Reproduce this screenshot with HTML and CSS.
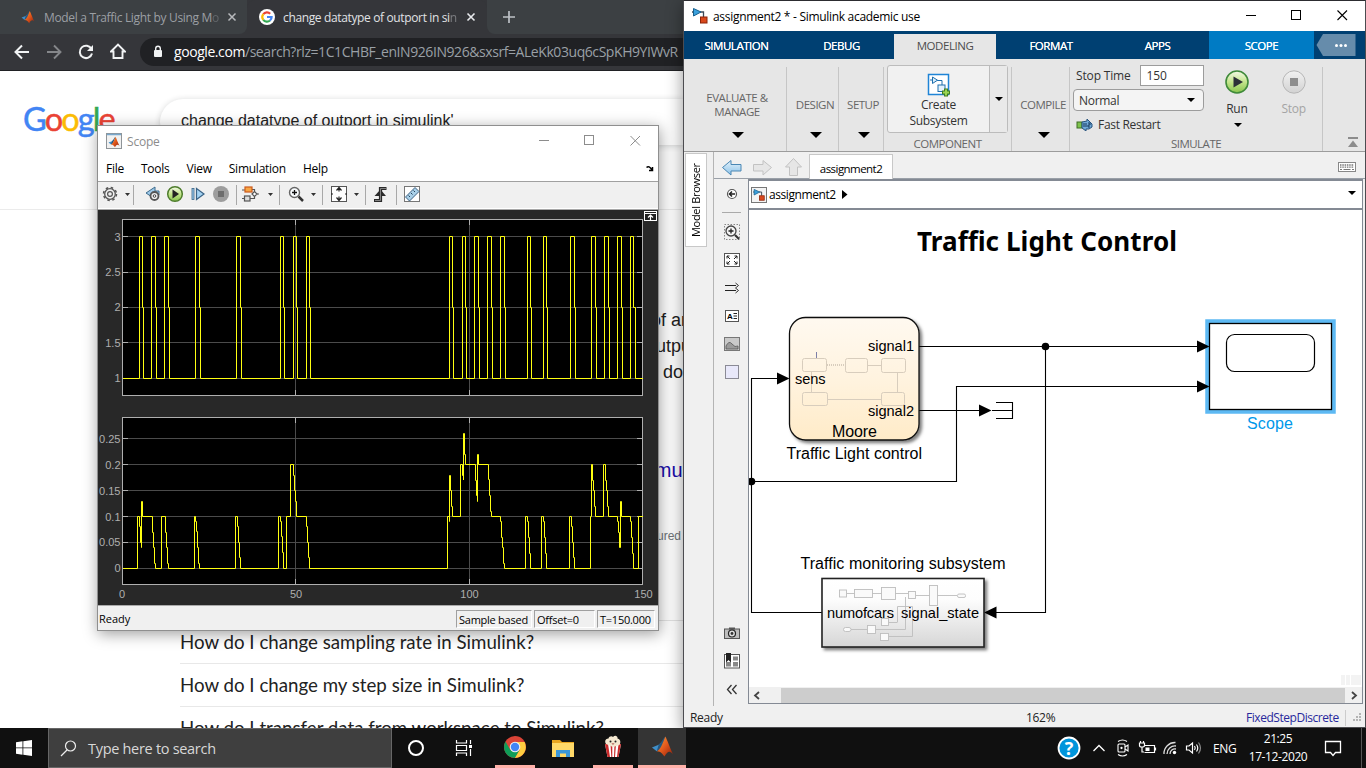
FILE: index.html
```html
<!DOCTYPE html>
<html lang="en">
<head>
<meta charset="utf-8">
<title>Desktop</title>
<link rel="stylesheet" href="styles.css">
</head>
<body>
<svg class="defs" width="0" height="0" aria-hidden="true">
  <defs>
    <linearGradient id="gOrange" x1="0" y1="0" x2="1" y2="1"><stop offset="0" stop-color="#f7a13c"/><stop offset=".5" stop-color="#e2581c"/><stop offset="1" stop-color="#8c1d0c"/></linearGradient>
    <linearGradient id="gGreen" x1="0" y1="0" x2="0" y2="1"><stop offset="0" stop-color="#f4fae8"/><stop offset=".5" stop-color="#c4e58c"/><stop offset="1" stop-color="#86c44c"/></linearGradient>
    <linearGradient id="gGrey" x1="0" y1="0" x2="0" y2="1"><stop offset="0" stop-color="#f2f2f2"/><stop offset="1" stop-color="#d2d2d2"/></linearGradient>
    <linearGradient id="gBlue" x1="0" y1="0" x2="0" y2="1"><stop offset="0" stop-color="#e4f3fc"/><stop offset="1" stop-color="#8cc2e8"/></linearGradient>
    <linearGradient id="gMoore" x1="0" y1="0" x2="0" y2="1"><stop offset="0" stop-color="#fff9f0"/><stop offset=".5" stop-color="#fff3df"/><stop offset="1" stop-color="#ffebc8"/></linearGradient>
    <linearGradient id="gSub" x1="0" y1="0" x2="0" y2="1"><stop offset="0" stop-color="#fff"/><stop offset=".3" stop-color="#fdfdfd"/><stop offset="1" stop-color="#d6d6d6"/></linearGradient>
    <filter id="drop" x="-10%" y="-10%" width="125%" height="125%"><feDropShadow dx="2.5" dy="2.5" stdDeviation="1.5" flood-color="#000" flood-opacity=".5"/></filter>
    <symbol id="matlab" viewBox="0 0 24 24">
      <path d="M1 13 8 10.300 11.500 7 9 14.500 6 17Z" fill="#3f8fc9"/>
      <path d="M8 10.300 C11 8 12 4 15 1.500 L10 15 6 17Z" fill="#25567e"/>
      <path d="M15 1.500 C17 5 20 14 23 20 C20 16.500 17.500 16 14 22.500 C12 20 10.500 17 6 17 C10 15 12 9 15 1.500Z" fill="url(#gOrange)"/>
    </symbol>
    <symbol id="simulink" viewBox="0 0 16 16">
      <path d="M0 4H2M8 4H11.500V9" fill="none" stroke="#3d4a58" stroke-width="1.300"/>
      <path d="M1.500 .5 9 4 1.500 8Z" fill="#3aa0dc" stroke="#17608f"/>
      <rect x="8.500" y="9" width="6.500" height="6" fill="#d9481c" stroke="#8c2409"/>
    </symbol>
    <symbol id="play" viewBox="0 0 24 24">
      <circle cx="12" cy="12" r="11" fill="url(#gGreen)" stroke="#3f8a3a" stroke-width="1.600"/>
      <path d="M8.500 6.500 18 12 8.500 17.500Z" fill="#2c3038"/>
    </symbol>
  </defs>
</svg>

<main class="desktop">

  <section class="browser">
    <div class="tabstrip">
      <div class="tab tab-idle">
        <svg class="favicon" width="14" height="14"><use href="#matlab"/></svg>
        <span class="tab-title t1">Model a Traffic Light by Using M<i>o</i></span>
        <svg width="10" height="10" viewBox="0 0 10 10"><path d="M1.500 1.500 8.500 8.500M8.500 1.500 1.500 8.500" stroke="#b8babd" stroke-width="1.500"/></svg>
      </div>
      <div class="tab tab-active">
        <svg class="favicon" width="16" height="16" viewBox="0 0 16 16"><circle cx="8" cy="8" r="8" fill="#fff"/><g fill="none" stroke-width="2.200"><path d="M4.300 5.200A4.600 4.600 0 0 1 11.200 4.700" stroke="#ea4335"/><path d="M4.300 10.800A4.600 4.600 0 0 1 4.300 5.200" stroke="#fbbc05"/><path d="M11 11.500A4.600 4.600 0 0 1 4.300 10.800" stroke="#34a853"/><path d="M8 8H12.600A4.600 4.600 0 0 1 11 11.500" stroke="#4285f4"/></g></svg>
        <span class="tab-title t2">change datatype of outport in si<i>n</i></span>
        <svg width="10" height="10" viewBox="0 0 10 10"><path d="M1.500 1.500 8.500 8.500M8.500 1.500 1.500 8.500" stroke="#e8eaed" stroke-width="1.600"/></svg>
      </div>
      <div class="newtab"><svg width="14" height="14" viewBox="0 0 14 14"><path d="M7 1V13M1 7H13" stroke="#bdc1c6" stroke-width="1.700"/></svg></div>
    </div>
    <div class="toolbar">
      <svg width="16" height="16" viewBox="0 0 16 16"><path d="M15 8H2M8 1.500 1.500 8 8 14.500" fill="none" stroke="#f1f3f4" stroke-width="2"/></svg>
      <svg width="16" height="16" viewBox="0 0 16 16"><path d="M1 8H14M8 1.500 14.500 8 8 14.500" fill="none" stroke="#85878a" stroke-width="1.900"/></svg>
      <svg width="16" height="16" viewBox="0 0 16 16"><path d="M13.500 5A6.200 6.200 0 1 0 14 9.500" fill="none" stroke="#f1f3f4" stroke-width="2"/><path d="M15 1V7H9Z" fill="#f1f3f4"/></svg>
      <svg width="16" height="17" viewBox="0 0 16 17"><path d="M1 8.500 8 1.500 15 8.500H12.500V15H3.500V8.500Z" fill="none" stroke="#f1f3f4" stroke-width="1.900"/></svg>
      <div class="omnibox">
        <svg width="10" height="13" viewBox="0 0 10 13"><rect x="1" y="5" width="8" height="7" rx="1" fill="#f1f3f4"/><path d="M2.700 5V3.500A2.300 2.300 0 0 1 7.300 3.500V5" fill="none" stroke="#f1f3f4" stroke-width="1.400"/></svg>
        <span class="url"><b>google.com</b>/search?rlz=1C1CHBF_enIN926IN926&amp;sxsrf=ALeKk03uq6cSpKH9YIWvR</span>
      </div>
    </div>
    <div class="page">
      <header class="ghead">
        <div class="glogo"><span class="gb">G</span><span class="gr">o</span><span class="gy">o</span><span class="gb">g</span><span class="gg">l</span><span class="gr">e</span></div>
        <div class="gsearch">change datatype of outport in simulink'</div>
      </header>
      <div class="snippet">
        <p class="s1">of an</p>
        <p class="s2">outpu</p>
        <p class="s3">do</p>
        <a class="s4">Simu</a>
        <small>tured</small>
      </div>
      <ul class="questions">
        <li>How do I change sampling rate in Simulink?</li>
        <li>How do I change my step size in Simulink?</li>
        <li>How do I transfer data from workspace to Simulink?</li>
      </ul>
    </div>
  </section>

  <section class="scope">
    <div class="sc-title">
      <svg width="16" height="16" viewBox="0 0 16 16"><rect x=".5" y=".5" width="15" height="15" fill="#f1f1f1" stroke="#8f9498"/><path d="M1 1.500H15" stroke="#78a8cc" stroke-width="1.500"/><use href="#matlab" x="2" y="3" width="12" height="12"/></svg>
      <span>Scope</span>
      <svg class="winbtns" width="104" height="12" viewBox="0 0 104 12"><path d="M2 5.500H12M93.500 1 103 10.500M103 1 93.500 10.500" stroke="#8c8c8c"/><rect x="47.500" y=".5" width="9" height="9" fill="none" stroke="#8c8c8c"/></svg>
    </div>
    <nav class="sc-menu">
      <span>File</span><span>Tools</span><span>View</span><span class="wide">Simulation</span><span>Help</span>
      <svg class="dock" width="8" height="7" viewBox="0 0 8 7"><path d="M.5 2.500Q3 0 6 5M3 5.500H6.500V2" fill="none" stroke="#000" stroke-width="1.500"/></svg>
    </nav>
    <div class="sc-tools">
      <svg width="556" height="26" viewBox="99 182 556 26">
        <path d="M133.500 185V205M236.500 185V205M279.500 185V205M322.500 185V205M365.500 185V205M396.500 185V205" fill="none" stroke="#a8a8a8"/>
        <g fill="#333"><path d="M125 193H130L127.500 196ZM268 193H273L270.500 196ZM311 193H316L313.500 196ZM354 193H359L356.500 196Z"/></g>
        <g fill="none" stroke="#555"><circle cx="110" cy="194" r="5.300" stroke-width="1.300"/><circle cx="110" cy="194" r="6.500" stroke-width="1.500" stroke-dasharray="2.500 2.600"/><circle cx="110" cy="194" r="2.400" stroke-width="1.200"/></g>
        <path d="M146 193 155 187V191H159V195H155V199Z" fill="#9cc8e8" stroke="#3c6a8c"/>
        <circle cx="154.500" cy="196" r="4" fill="#f0f0f0" stroke="#555" stroke-width="1.800"/><circle cx="154.500" cy="196" r="1.300" fill="#fff" stroke="#444"/>
        <circle cx="175" cy="194" r="7.300" fill="url(#gGreen)" stroke="#4e7c2c" stroke-width="1.500"/><path d="M172.500 189.500 179 194 172.500 198.500Z" fill="#222"/>
        <rect x="192" y="188.500" width="2" height="11" fill="#9ccdf0" stroke="#3a6386" stroke-width=".8"/><path d="M196.500 188.500 204 194 196.500 199.500Z" fill="#a4d2f2" stroke="#3a6386" stroke-width="1.200"/>
        <circle cx="221" cy="194" r="8" fill="#9d9d9d"/><rect x="218" y="191" width="6" height="6" fill="#6d6d6d"/>
        <g fill="none" stroke="#555" stroke-width="1.200"><path d="M242 190H245M252 189.500H254.500V192M254.500 196V198.500H250M242 198.500H244M257 194H259"/><rect x="245" y="187" width="7" height="5" fill="#f8a544" stroke="#cc5a1c"/><rect x="244.500" y="196" width="5.500" height="5" fill="#ddd"/><path d="M252 194 254.500 191.500 257 194 254.500 196.500Z" fill="#fff"/></g>
        <circle cx="294.500" cy="192.500" r="5" fill="#f8fbfd" stroke="#666" stroke-width="1.400"/><path d="M298.500 196.500 303 201" stroke="#333" stroke-width="2.500"/><path d="M292 192.500H297M294.500 190V195" stroke="#111" stroke-width="1.300"/>
        <rect x="331.500" y="186.500" width="15" height="15" fill="#fdfdfd" stroke="#555"/><path d="M339 188V191.500M339 196.500V200M336.500 190.500 339 187.500 341.500 190.500M336.500 197.500 339 200.500 341.500 197.500M331 194H333M345 194H347" fill="none" stroke="#222" stroke-width="1.200"/>
        <path d="M374 200.500H380.500V188.500H386.500" fill="none" stroke="#2a2a2a" stroke-width="3.200"/><path d="M374.500 196 380.500 189.500 386 196Z" fill="#2a2a2a"/><path d="M375 200.500H380.500V188.500H386" fill="none" stroke="#999" stroke-width=".8"/>
        <rect x="404.500" y="186.500" width="15" height="15" fill="#fff" stroke="#777"/><path d="M405.500 197 415 187.500 419 191.500 409.500 201Z" fill="#a8cfe8" stroke="#3c6182"/><path d="M408.500 195.500 410 197M411 193 412.500 194.500M413.500 190.500 415 192" stroke="#23425c"/>
      </svg>
    </div>
    <div class="sc-plot">
      <svg width="560" height="395" viewBox="98 210 560 395">
        <rect x="122.500" y="219.500" width="520" height="176" fill="#000"/>
        <rect x="122.500" y="417.500" width="520" height="167" fill="#000"/>
        <g fill="none" stroke="#4b4b4b">
          <path d="M122 236.500H642M122 272.500H642M122 307.500H642M122 342.500H642M122 378.500H642M295.500 220V395M469.500 220V395"/>
          <path d="M122 438.500H642M122 464.500H642M122 490.500H642M122 516.500H642M122 542.500H642M122 568.500H642M295.500 418V584M469.500 418V584"/>
        </g>
        <g fill="none" stroke="#afafaf">
          <rect x="122.500" y="219.500" width="520" height="176"/><rect x="122.500" y="417.500" width="520" height="167"/>
          <path d="M123 236.500h5M123 272.500h5M123 307.500h5M123 342.500h5M123 378.500h5M642 236.500h-5M642 272.500h-5M642 307.500h-5M642 342.500h-5M642 378.500h-5M295.500 220v5M469.500 220v5M295.500 395v-5M469.500 395v-5"/>
          <path d="M123 438.500h5M123 464.500h5M123 490.500h5M123 516.500h5M123 542.500h5M123 568.500h5M642 438.500h-5M642 464.500h-5M642 490.500h-5M642 516.500h-5M642 542.500h-5M642 568.500h-5M295.500 418v5M469.500 418v5M295.500 584v-5M469.500 584v-5"/>
        </g>
        <g fill="none" stroke="#ffff11">
          <path d="M123 378.500H139.500V236.500H142.500V307.500H143.500V378.500H151.500V236.500H155.500V307.500H156.500V378.500H164.500V236.500H168.500V307.500H169.500V378.500H195.500V236.500H199.500V307.500H200.500V378.500H236.500V236.500H240.500V307.500H241.500V378.500H280.500V236.500H283.500V307.500H284.500V378.500H293.500V236.500H296.500V307.500H297.500V378.500H306.500V236.500H309.500V307.500H310.500V378.500H449.500V236.500H452.500V307.500H453.500V378.500H462.500V236.500H465.500V307.500H466.500V378.500H474.500V236.500H478.500V307.500H479.500V378.500H487.500V236.500H491.500V307.500H492.500V378.500H500.500V236.500H504.500V307.500H505.500V378.500H527.500V236.500H530.500V307.500H531.500V378.500H543.500V236.500H546.500V307.500H547.500V378.500H570.500V236.500H574.500V307.500H575.500V378.500H591.500V236.500H595.500V307.500H596.500V378.500H604.500V236.500H608.500V307.500H609.500V378.500H617.500V236.500H621.500V307.500H622.500V378.500H630.500V236.500H633.500V307.500H635.500V378.500H643"/>
          <path d="M123 568.500H137.500V516.500H139.500V526.500H140.500V542.500H141.500V547.500V501.500H142.500V516.500H152.500V532.500H153.500V547.500H154.500V563.500H155.500V568.500H161.500V516.500H165.500V532.500H166.500V547.500H167.500V563.500H168.500V568.500H194.500V516.500H195.500V521.500H196.500V531.500H197.500V547.500H198.500V563.500H199.500V568.500H235.500V516.500H237.500V526.500H238.500V542.500H239.500V557.500H240.500V568.500H278.500V516.500H280.500V521.500H281.500V536.500H282.500V552.500H283.500V568.500H286.500V516.500H290.500V464.500H293.500V475.500H294.500V490.500H295.500V501.500H296.500V516.500H306.500V526.500H307.500V542.500H308.500V557.500H309.500V568.500H447.500V516.500H449.500V521.500V475.500H450.500V490.500H451.500V506.500H452.500V516.500H460.500V464.500H462.500V475.500H463.500V480V433.500H464.500V454.500H465.500V464.500H475.500V480.500H476.500V495.500H477.500V501.500V454.500H478.500V464.500H488.500V479.500H489.500V495.500H490.500V511.500H491.500V516.500H500.500V521.500H501.500V537.500H502.500V547.500H503.500V563.500H504.500V568.500H525.500V516.500H527.500V521.500H528.500V537.500H529.500V553.500H530.500V568.500H541.500V516.500H543.500V521.500H544.500V537.500H545.500V553.500H546.500V568.500H569.500V516.500H571.500V526.500H572.500V542.500H573.500V557.500H574.500V568.500H590.500V516.500H591.500V464.500H592.500V480.500H593.500V490.500H594.500V506.500H595.500V516.500H603.500V464.500H605.500V480.500H606.500V490.500H607.500V506.500H608.500V516.500H617.500V521.500H618.500V532.500H619.500V547.500H620.500V501.500H621.500V516.500H630.500V521.500H631.500V537.500H632.500V553.500H633.500V568.500H638.500V516.500H643"/>
        </g>
        <g class="ytick"><text x="120.500" y="241">3</text><text x="120.500" y="276">2.5</text><text x="120.500" y="311">2</text><text x="120.500" y="347">1.5</text><text x="120.500" y="382">1</text><text x="120.500" y="443">0.25</text><text x="120.500" y="469">0.2</text><text x="120.500" y="495">0.15</text><text x="120.500" y="521">0.1</text><text x="120.500" y="546">0.05</text><text x="120.500" y="572">0</text></g>
        <g class="xtick"><text x="122" y="598">0</text><text x="296" y="598">50</text><text x="469.500" y="598">100</text><text x="643.500" y="598">150</text></g>
        <rect x="644.500" y="211.500" width="12" height="9" fill="#222" stroke="#fff"/><path d="M645 213.500H657M650.500 220V215M648 217.500 650.500 215 653 217.500" fill="none" stroke="#fff" stroke-width="1.200"/>
      </svg>
    </div>
    <footer class="sc-status"><span class="ready">Ready</span><span class="cell c1">Sample based</span><span class="cell c2">Offset=0</span><span class="cell c3">T=150.000</span></footer>
  </section>

  <section class="simulink">
    <div class="sl-title">
      <svg width="16" height="16"><use href="#simulink"/></svg>
      <span>assignment2 * - Simulink academic use</span>
      <svg class="winbtns" width="104" height="12" viewBox="0 0 104 12"><path d="M1 5.500H11M92.500 .5 102 10M102 .5 92.500 10" stroke="#000" stroke-width="1.100"/><rect x="46.500" y=".5" width="9" height="9" fill="none" stroke="#000"/></svg>
    </div>
    <nav class="sl-tabs">
      <span class="w105">SIMULATION</span><span class="w105">DEBUG</span><span class="current">MODELING</span><span class="w110">FORMAT</span><span class="w103">APPS</span><span class="ctx">SCOPE</span>
      <svg width="40" height="22" viewBox="0 0 40 22"><path d="M.5 11 7 0H39.500V22H7Z" fill="#668cab"/><g fill="#fff"><circle cx="20.500" cy="11.500" r="1.500"/><circle cx="25" cy="11.500" r="1.500"/><circle cx="29.500" cy="11.500" r="1.500"/></g></svg>
    </nav>
    <div class="ribbon">
      <div class="sect s-eval"><span>EVALUATE &amp;<br>MANAGE</span><i class="tri"></i></div>
      <div class="sect s-design"><span>DESIGN</span><i class="tri"></i></div>
      <div class="sect s-setup"><span>SETUP</span><i class="tri"></i></div>
      <div class="sect s-comp">
        <div class="create">
          <div class="create-main">
            <svg width="24" height="24" viewBox="0 0 24 24"><rect x="1.500" y="1.500" width="20" height="20" fill="#fff" stroke="#1f84d6" stroke-width="1.500"/><path d="M3 7H6M10 7.500H15V12" fill="none" stroke="#1f6fae"/><path d="M5.500 4 10.500 7.200 5.500 10.500Z" fill="#d8eefb" stroke="#1f6fae"/><rect x="11" y="12" width="7" height="6.500" fill="#e4f2fb" stroke="#1f6fae"/><path d="M19 15.500V23.500M15 19.500H23" stroke="#3f7d20" stroke-width="4"/><path d="M19 16.500V22.500M16 19.500H22" stroke="#9bd653" stroke-width="2"/></svg>
            <span>Create<br>Subsystem</span>
          </div>
          <div class="create-more"><i class="tri small"></i></div>
        </div>
        <span class="caption">COMPONENT</span>
      </div>
      <div class="sect s-compile"><span>COMPILE</span><i class="tri"></i></div>
      <div class="sect s-sim">
        <div class="sim-row">
          <div class="sim-form">
            <div class="stoptime"><label>Stop Time</label><span class="field">150</span></div>
            <div class="mode"><span>Normal</span><i class="tri small"></i></div>
            <div class="fast"><svg width="17" height="12" viewBox="0 0 17 12"><rect x="1" y="3" width="5" height="6" fill="#7ec34c" stroke="#3c6c24"/><path d="M6 3 11 2V0L14 3 16 5V8L13 10H10V12L6 9Z" fill="#6fa8d8" stroke="#27537c"/><path d="M8 4V8M10 4V8M12 4H14V6H12V8H14" fill="none" stroke="#17395c"/></svg><span>Fast Restart</span></div>
          </div>
          <div class="run"><svg width="24" height="24"><use href="#play"/></svg><span>Run</span><i class="tri small"></i></div>
          <div class="run off"><svg width="24" height="24" viewBox="0 0 24 24"><circle cx="12" cy="12" r="11.200" fill="url(#gGrey)" stroke="#b6b6b6"/><rect x="8" y="8" width="8" height="8" fill="#8e8e8e"/></svg><span>Stop</span></div>
        </div>
        <span class="caption">SIMULATE</span>
      </div>
      <div class="s-end"><svg width="12" height="11" viewBox="0 0 12 11"><path d="M1 1H11" stroke="#8c8c8c" stroke-width="2"/><path d="M6 3.500 11 10H1Z" fill="#8c8c8c"/></svg></div>
    </div>
    <div class="workarea">
      <div class="mb"><span>Model Browser</span></div>
      <div class="editor">
        <div class="navrow">
          <svg width="92" height="22" viewBox="716 156 92 22"><path d="M721.500 167.500 730 160.500V164.500H740V171H730V175Z" fill="url(#gBlue)" stroke="#4a87b4"/><path d="M770.500 167.500 762 160.500V164.500H752.500V171H762V175Z" fill="#e6e6e6" stroke="#c2c2c2"/><path d="M792.500 158.500 800.500 167H796.500V175.500H788.500V167H784.500Z" fill="#e6e6e6" stroke="#c2c2c2"/></svg>
          <span class="doctab">assignment2</span>
          <svg class="kbd" width="18" height="10" viewBox="0 0 18 10"><rect x=".5" y=".5" width="17" height="9" fill="#fff" stroke="#888"/><path d="M2 3H16M2 5.200H16" stroke="#777" stroke-width="1.300" stroke-dasharray="1.500 .8"/><path d="M2 7.500H4M5.500 7.500H12.500M14 7.500H16" stroke="#777" stroke-width="1.200"/></svg>
        </div>
        <div class="edbody">
          <aside class="palette">
            <svg width="34" height="525" viewBox="714 179 34 525">
              <circle cx="732" cy="194" r="4.500" fill="#fff" stroke="#555" stroke-width="1.200"/><path d="M730 194H735M732 191.500 729.500 194 732 196.500" fill="none" stroke="#222" stroke-width="1.500"/>
              <path d="M722 212.500H741" stroke="#aaa"/>
              <rect x="724.500" y="224.500" width="15" height="15" fill="none" stroke="#888" stroke-dasharray="1.500 1.500"/><circle cx="731" cy="231" r="5" fill="#f4f4f4" stroke="#444" stroke-width="1.300"/><path d="M735 235 739 239" stroke="#333" stroke-width="2.200"/><path d="M728.500 231H733.500M731 228.500V233.500" stroke="#222" stroke-width="1.300"/>
              <rect x="724.500" y="253.500" width="15" height="13" fill="#fff" stroke="#555"/><path d="M727 258.500V256H729.500M734.500 256H737V258.500M737 261.500V264H734.500M729.500 264H727V261.500M727 256 730 259M737 256 734 259M737 264 734 261M727 264 730 261" fill="none" stroke="#222"/>
              <path d="M725 285.500H736M725 290.500H736" stroke="#222" stroke-width="1.200"/><path d="M735.500 283 738.500 285.500 735.500 288 738.500 290.500 735.500 293" fill="none" stroke="#333"/>
              <rect x="725.500" y="310.500" width="13" height="11" fill="#fff" stroke="#555"/><text class="ico" x="727" y="319">A</text><path d="M733.500 313.500H737M733.500 316H737M733.500 318.500H737" stroke="#222"/>
              <rect x="724.500" y="337.500" width="15" height="13" fill="#c9c9c9" stroke="#777"/><path d="M726 346Q729 340 732 344T738 346V349H726Z" fill="#9a9a9a" stroke="#555" stroke-width=".8"/>
              <rect x="725.500" y="365.500" width="13" height="13" fill="#e8e8fa" stroke="#8a8a95"/>
              <rect x="724.500" y="629" width="15" height="9.500" fill="#bdbdbd" stroke="#555"/><rect x="729" y="627.500" width="6" height="2" fill="#555"/><circle cx="732" cy="633.500" r="3.500" fill="#ddd" stroke="#222" stroke-width="1.200"/><circle cx="732" cy="633.500" r="1.400" fill="#333"/>
              <rect x="724.500" y="654.500" width="15" height="13.500" fill="#fff" stroke="#555"/><path d="M726 662h5v4.500h-5zM733 656.500h5v4h-5zM733 662h5v4.500h-5z" fill="#888"/><path d="M726 653H731V662.500L728.500 660 726 662.500Z" fill="#222"/>
              <path d="M731.500 685 727.500 689.500 731.500 694M736.500 685 732.500 689.500 736.500 694" fill="none" stroke="#333" stroke-width="1.300"/>
            </svg>
          </aside>
          <div class="canvas-col">
            <div class="crumbs">
              <svg width="16" height="16" viewBox="0 0 16 16"><rect x=".5" y=".5" width="15" height="15" fill="#f4f4f4" stroke="#777"/><use href="#simulink" x="2" y="2" width="12" height="12"/></svg>
              <span>assignment2</span>
              <svg width="6" height="9" viewBox="0 0 6 9"><path d="M0 0 5.500 4.500 0 9Z"/></svg>
              <i class="tri small"></i>
            </div>
            <svg class="diagram" width="613" height="477" viewBox="749 210 613 477">
              <text class="dtitle" x="917" y="251" textLength="260">Traffic Light Control</text>
              <g fill="none" stroke="#000" stroke-width="1.100">
                <path d="M919 346.500H1198M1045.500 346.500V612.500H995M822 612.500H751.500V378.500H778M751.500 481.500H956.500V386.500H1198"/>
                <path d="M919 410.500H980M992 410.500H1012.500M996 402.500H1012.500V418.500H996"/>
              </g>
              <g fill="#000">
                <path d="M777 372.500 789.500 378.500 777 384.500ZM979 404.500 991.500 410.500 979 416.500ZM996.500 606.500 984 612.500 996.500 618.500Z"/>
                <circle cx="1045.500" cy="346.500" r="3.800"/><circle cx="751.500" cy="481.500" r="3.800"/>
              </g>
              <rect x="789.500" y="317.500" width="129.500" height="122.500" rx="16" fill="url(#gMoore)" stroke="#111" stroke-width="1.300" filter="url(#drop)"/>
              <g fill="none" stroke="#d8cdbd">
                <rect x="802.500" y="358.500" width="24" height="13" rx="2"/><rect x="845.500" y="358.500" width="22" height="14" rx="2"/><rect x="881.500" y="358.500" width="24" height="14" rx="2"/><rect x="802.500" y="392.500" width="25" height="13" rx="2"/><rect x="881.500" y="392.500" width="23" height="13" rx="2"/>
                <path d="M868 365.500H881M897.500 372V392M828 399.500H881M811.500 372V392"/><path d="M827 365H845" stroke-width="2" stroke-dasharray="1 1"/><path d="M816.500 352V358" stroke="#7d7fa8"/>
              </g>
              <rect x="1207.500" y="321.500" width="126" height="90" fill="#fff" stroke="#5db9f3" stroke-width="4.500"/>
              <rect x="1209.500" y="323.500" width="122" height="86" fill="#fff" stroke="#000" stroke-width="1.300"/>
              <rect x="1226.500" y="334.500" width="88" height="37" rx="8" fill="#fff" stroke="#000" stroke-width="1.200"/>
              <path d="M1197 340.500 1209.500 346.500 1197 352.500ZM1197 380.500 1209.500 386.500 1197 392.500Z"/>
              <rect x="822" y="578.500" width="162" height="68.500" fill="url(#gSub)" stroke="#222" stroke-width="1.600" filter="url(#drop)"/>
              <g fill="#fafafa" stroke="#bdbdbd" stroke-width=".9">
                <path fill="none" d="M847 593.500H908M916 595.500H957M905.500 597V629.500H875M897.500 622V606.500H912.500V636.500H889M889 622.500H897.500M851 629.500H867"/>
                <rect x="839.500" y="590" width="7" height="7"/><rect x="854.500" y="589.500" width="18" height="8"/><rect x="881.500" y="587.500" width="14" height="12"/><rect x="908.500" y="591.500" width="7" height="7"/><rect x="929.500" y="585.500" width="8" height="20"/><rect x="957.500" y="594" width="8" height="3.500" rx="1.500"/><rect x="881.500" y="618.500" width="7" height="7"/><rect x="843.500" y="627.500" width="7.500" height="4" rx="2"/><rect x="867.500" y="625.500" width="8" height="8"/><rect x="880.500" y="633.500" width="8" height="7"/>
              </g>
              <g class="dlabel">
                <text x="868" y="351" textLength="46">signal1</text><text x="795" y="384" textLength="30.500">sens</text><text x="868" y="416" textLength="46">signal2</text>
                <text x="827" y="618" textLength="67">numofcars</text><text x="901" y="618" textLength="78">signal_state</text>
                <text class="big" x="832" y="437" textLength="45">Moore</text><text class="big" x="786.500" y="459" textLength="135.500">Traffic Light control</text><text class="big" x="800.500" y="569" textLength="205">Traffic monitoring subsystem</text><text class="big sel" x="1247" y="429" textLength="46">Scope</text>
              </g>
              <path d="M1341 675h4v10h-4zM1346 675h4v10h-4zM1351 675h10v10h-10z" fill="#f3f3f3"/>
            </svg>
            <div class="hscroll"><svg width="8" height="9" viewBox="0 0 8 9"><path d="M6 1 2 4.500 6 8" fill="none" stroke="#444" stroke-width="1.800"/></svg><div class="thumb"></div><svg width="8" height="9" viewBox="0 0 8 9"><path d="M2 1 6 4.500 2 8" fill="none" stroke="#444" stroke-width="1.800"/></svg></div>
          </div>
        </div>
      </div>
    </div>
    <footer class="sl-status"><span class="st1">Ready</span><span class="st2">162%</span><span class="st3">FixedStepDiscrete</span><i class="vline"></i><svg width="9" height="9" viewBox="0 0 9 9"><path d="M6 0h2v2h-2zM3 3h2v2h-2zM6 3h2v2h-2zM0 6h2v2h-2zM3 6h2v2h-2zM6 6h2v2h-2z" fill="#b4b4b4"/></svg></footer>
  </section>

  <footer class="taskbar">
    <div class="start"><svg width="16" height="16" viewBox="0 0 16 16"><path d="M0 2.200 6.500 1.300V7.500H0ZM7.300 1.200 16 0V7.500H7.300ZM0 8.300H6.500V14.700L0 13.800ZM7.300 8.300H16V16L7.300 14.800Z" fill="#fff"/></svg></div>
    <div class="tsearch"><svg width="17" height="17" viewBox="0 0 17 17"><circle cx="10.500" cy="6" r="5" fill="none" stroke="#eee" stroke-width="1.200"/><path d="M7 10 1 16" stroke="#eee" stroke-width="1.300"/></svg><span>Type here to search</span></div>
    <div class="tbtn"><svg width="18" height="18" viewBox="0 0 18 18"><circle cx="9" cy="9" r="7" fill="none" stroke="#fff" stroke-width="2"/></svg></div>
    <div class="tbtn"><svg width="18" height="16" viewBox="0 0 18 16"><path d="M1.500 0V3H11.500V0M1.500 16V13H11.500V16M1.500 5.500H11.500V10.500H1.500ZM15.500 0V4M15.500 9V16" fill="none" stroke="#fff" stroke-width="1.200"/><rect x="14" y="5" width="3" height="3" fill="#fff"/></svg></div>
    <div class="tbtn app first"><svg width="22" height="22" viewBox="0 0 22 22"><circle cx="11" cy="11" r="11" fill="#db4437"/><path d="M1.500 5.500A11 11 0 0 0 11 22L15.800 13.800 11 16 6.200 13.800Z" fill="#0f9d58"/><path d="M20.600 6H11L15.800 13.800 11 22A11 11 0 0 0 20.600 6Z" fill="#ffcd40"/><circle cx="11" cy="11" r="5.300" fill="#f1f1f1"/><circle cx="11" cy="11" r="4.200" fill="#4285f4"/></svg></div>
    <div class="tbtn"><svg width="22" height="19" viewBox="0 0 22 19"><path d="M0 1H8L10 3H22V17H0Z" fill="#e9a620"/><path d="M0 4H22V18H0Z" fill="#ffd968"/><path d="M4 18V11H18V18H14V14.500H8V18Z" fill="#3b97d8"/></svg></div>
    <div class="tbtn app pop"><svg width="18" height="23" viewBox="0 0 18 23"><path d="M1 9H17L14.500 22H3.500Z" fill="#fff"/><path d="M1 9H4L6 22H3.500ZM6.500 9H8.300V22H7.300ZM10.500 9H12L11 22H10ZM14.500 9H17L14.500 22H13Z" fill="#c92a2a"/><path d="M2 9C0 6 2 3.500 4.500 3.500 5 1 8 .5 9 2 11-.5 14 1 13.500 3.500 16.500 4 17 7 15.500 10L9 12Z" fill="#f4e8d0"/><circle cx="6.500" cy="6.500" r="1" fill="#222"/><circle cx="11.500" cy="6.500" r="1" fill="#222"/><path d="M7.500 8.500Q9 10.500 10.500 8.500Z" fill="#8d2020"/></svg></div>
    <div class="tbtn app mat"><svg width="23" height="23"><use href="#matlab"/></svg></div>
    <div class="tray">
      <svg class="help" width="24" height="24" viewBox="0 0 24 24"><circle cx="12" cy="12" r="10.500" fill="#0095db" stroke="#fff" stroke-width="1.800"/><text x="12" y="18.500" class="qm">?</text></svg>
      <svg width="24" height="16" viewBox="0 0 24 16"><path d="M6.500 11 12 5.500 17.500 11" fill="none" stroke="#fff" stroke-width="1.300"/></svg>
      <svg width="24" height="18" viewBox="0 0 24 18"><g fill="none" stroke="#fff" stroke-width="1.100"><rect x="7" y="5" width="7" height="8" rx="1"/><path d="M14 8 17 6V12L14 10M7 2.500Q11.500-.5 16 2.500M7 15.500Q11.500 18.500 16 15.500"/><circle cx="10.500" cy="9" r=".6"/></g></svg>
      <svg width="25" height="16" viewBox="0 0 25 16"><g fill="none" stroke="#fff" stroke-width="1.200"><path d="M9 5.500H19.500V12.500H9.500"/><path d="M20.500 7.500V10.500"/><path d="M4.500 3H9.500V5.500Q9.500 7 7 7T4.500 5.500ZM5.500 1V3M8.500 1V3M7 7V12H9"/></g><rect x="10.500" y="7.500" width="4" height="3.500" fill="#fff"/></svg>
      <svg width="22" height="16" viewBox="0 0 22 16"><g fill="none" stroke-width="1.300"><path d="M4 14A11 11 0 0 1 15.500 2.500M7 14A8 8 0 0 1 16 6M10 14A5 5 0 0 1 16 9" stroke="#ddd"/></g><circle cx="14.500" cy="12.500" r="1.700" fill="#fff"/></svg>
      <svg class="spk" width="24" height="16" viewBox="0 0 24 16"><g fill="none" stroke="#fff" stroke-width="1.200"><path d="M4.500 6H7L10.500 3V13L7 10H4.500ZM12.500 6Q14 8 12.500 10M14.500 4.500Q17 8 14.500 11.500"/><path d="M16.500 2.500Q20.500 8 16.500 13.500" stroke="#888"/></g></svg>
      <span class="eng">ENG</span>
      <span class="clock">21:25<br><b>17-12-2020</b></span>
      <svg class="notif" width="18" height="17" viewBox="0 0 18 17"><path d="M1.500 1.500H16.500V12.500H11.500L9 15.500 6.500 12.500H1.500Z" fill="none" stroke="#fff" stroke-width="1.300"/></svg>
      <i class="peek"></i>
    </div>
  </footer>
</main>
</body>
</html>
```
FILE: styles.css
```css
* { box-sizing: border-box; }
body { margin: 0; font-family: "Open Sans", "Noto Sans", sans-serif; font-size: 12px; color: #000; }
svg { display: block; flex: none; }
p, ul { margin: 0; padding: 0; list-style: none; }
i, b { font-style: normal; font-weight: inherit; }
.defs { position: absolute; }
.desktop { position: relative; width: 1366px; height: 768px; overflow: hidden; background: #35363a; }
.winbtns { margin-left: auto; }
.tri { width: 0; height: 0; border: 6px solid transparent; border-top-color: #000; border-bottom: 0; }
.tri.small { border-width: 4px; border-bottom: 0; }

/* Browser window */
.browser { position: absolute; left: 0; top: 0; width: 684px; height: 728px; overflow: hidden; background: #fff; }
.tabstrip { display: flex; height: 34px; background: #35363a; color: #9b9fa3; }
.tab { display: flex; align-items: center; white-space: nowrap; }
.tab-idle { width: 247px; padding-left: 21px; background: #3c4043; border-bottom-right-radius: 8px; }
.tab-active { width: 240px; padding-left: 12px; background: #35363a; border-radius: 8px 8px 0 0; color: #e0e2e5; }
.tab-title { overflow: hidden; }
.tab-title i { opacity: .4; }
.t1 { width: 176px; margin: 0 7px 0 9px; letter-spacing: -.33px; }
.t2 { width: 176px; margin: 0 7px 0 8px; letter-spacing: -.36px; }
.newtab { flex: 1; display: flex; align-items: center; padding-left: 15px; background: #3c4043; border-bottom-left-radius: 8px; }
.toolbar { display: flex; align-items: center; gap: 16px; height: 37px; padding: 0 0 1px 14px; background: #35363a; border-bottom: 1px solid #202124; }
.omnibox { flex: 1; display: flex; align-items: center; gap: 11px; height: 28px; margin-left: -2px; padding-left: 13px; background: #202124; border-radius: 14px 0 0 14px; overflow: hidden; }
.url { color: #9aa0a6; font-size: 14px; white-space: nowrap; letter-spacing: -.43px; }
.url b { color: #fff; }
.page { display: flex; flex-direction: column; height: 657px; font-family: "Liberation Sans", sans-serif; }
.ghead { display: flex; flex: none; height: 139px; padding: 28px 0 0 23px; border-bottom: 1px solid #ebebeb; }
.glogo { width: 137px; padding-top: 2px; font: 32.500px/36px Lato, sans-serif; letter-spacing: -1.900px; -webkit-text-stroke: .5px; }
.gb { color: #4285f4; } .gr { color: #ea4335; } .gy { color: #fbbc05; } .gg { color: #34a853; }
.gsearch { flex: 1; height: 46px; padding-left: 21px; border-radius: 23px 0 0 23px; box-shadow: 0 1px 6px rgba(32,33,36,.2); font-size: 16px; line-height: 44px; color: #222; }
.snippet { display: flex; flex: none; flex-direction: column; height: 410px; padding-top: 97px; font-size: 18px; line-height: 26px; color: #222; overflow: hidden; white-space: nowrap; }
.s1 { padding-left: 651px; } .s2 { padding-left: 646px; } .s3 { padding-left: 663px; }
.s4 { padding: 72px 0 0 637px; font-size: 20px; color: #1a0dab; }
.snippet small { padding: 40px 3px 0 0; text-align: right; font-size: 12px; color: #70757a; }
.questions { flex: none; margin-left: 180px; border-top: 1px solid #e4e4e4; font: 18.700px/42px Lato, sans-serif; color: #222; white-space: nowrap; }
.questions li { height: 43px; border-bottom: 1px solid #e8e8e8; }

/* Scope window */
.scope { position: absolute; left: 97px; top: 125px; width: 562px; height: 506px; display: flex; flex-direction: column; background: #fff; border: 1px solid #8f8f8f; box-shadow: 1px 3px 14px rgba(0,0,0,.38); }
.sc-title { display: flex; align-items: center; gap: 5px; height: 30px; padding: 0 17px 0 8px; color: #8c8c8c; letter-spacing: -.2px; }
.sc-menu { display: flex; align-items: center; height: 26px; padding: 0 4px 0 8px; border-bottom: 1px solid #a0a0a0; letter-spacing: -.25px; }
.sc-menu span { margin-right: 17px; }
.dock { margin-left: auto; }
.sc-tools { height: 28px; padding: 0 1px; background: #f0f0f0; border-bottom: 1px solid #a8a8a8; box-shadow: inset 0 -1px #fff; }
.sc-plot { height: 395px; background: #282828; }
.ytick, .xtick { font: 11px "Liberation Sans", sans-serif; fill: #afafaf; }
.ytick { text-anchor: end; } .xtick { text-anchor: middle; }
.sc-status { flex: 1; display: flex; align-items: center; gap: 2px; padding: 2px 3px 1px 1px; background: #f0f0f0; border-top: 1px solid #aaa; font: 11px "Open Sans", sans-serif; }
.ready { margin-right: auto; }
.cell { height: 18px; padding-left: 2px; line-height: 17px; border: 1px solid #a0a0a0; border-right-color: #fff; border-bottom-color: #fff; white-space: nowrap; letter-spacing: -.25px; }
.c1 { width: 76px; } .c2 { width: 61px; } .c3 { width: 58px; }

/* Simulink window */
.simulink { position: absolute; left: 683px; top: 0; width: 683px; height: 728px; display: flex; flex-direction: column; background: #f0f0f0; border: 1px solid #4c4c50; border-top-color: #2c2c30; box-shadow: 0 4px 16px rgba(0,0,0,.42); letter-spacing: -.3px; }
.sl-title { display: flex; align-items: center; gap: 5px; height: 30px; padding: 0 16px 0 8px; background: #fff; }
.sl-tabs { display: flex; align-items: flex-end; height: 28px; background: #004072; color: #fff; font-size: 11.500px; letter-spacing: -.45px; }
.sl-tabs span { height: 25px; line-height: 23px; text-align: center; text-shadow: 0 0 .4px #fff; }
.w105 { width: 105px; } .w110 { width: 110px; } .w103 { width: 103px; }
.sl-tabs .current { width: 102px; background: #e6e6e6; color: #4d4d4d; text-shadow: none; }
.sl-tabs .ctx { width: 105px; height: 28px; line-height: 29px; background: #007bc4; }
.sl-tabs svg { margin: 0 0 3px 2px; }
.ribbon { display: flex; height: 93px; padding-top: 8px; background: #e6e6e6; border-bottom: 1px solid #9c9c9c; color: #333; }
.sect { display: flex; flex-direction: column; align-items: center; border-right: 1px solid #c6c6c6; }
.sect > span { color: #666; font-size: 11.500px; line-height: 14px; text-align: center; white-space: nowrap; letter-spacing: -.5px; }
.sect > .tri { margin: auto 0 13px 1px; }
.s-eval { width: 103px; padding: 24px 0 0 4px; }
.s-design { width: 52px; padding: 31px 0 0 5px; }
.s-setup { width: 45px; padding: 31px 0 0 4px; }
.s-comp { width: 128px; }
.create { display: flex; width: 121px; height: 68px; margin: -2px 0 4px; background: #f1f1f1; border: 1px solid #bcbcbc; border-radius: 3px; }
.create-main { width: 101px; display: flex; flex-direction: column; align-items: center; padding-top: 7px; text-align: center; line-height: 16px; }
.create-more { flex: 1; display: flex; align-items: center; justify-content: center; background: #e9e9e9; border-left: 1px solid #bcbcbc; }
.s-compile { width: 58px; padding: 31px 0 0 5px; }
.s-sim { width: 253px; }
.sim-row { display: flex; width: 100%; height: 70px; margin-top: -2px; padding-left: 3px; }
.sim-form { width: 132px; }
.stoptime { display: flex; align-items: center; justify-content: space-between; height: 21px; padding-left: 3px; letter-spacing: -.15px; }
.field { width: 64px; height: 21px; padding-left: 5px; background: #fff; border: 1px solid #9c9c9c; line-height: 20px; }
.mode { display: flex; align-items: center; justify-content: space-between; height: 22px; margin-top: 3px; padding: 0 8px 0 5px; background: #f4f4f4; border: 1px solid #9c9c9c; border-radius: 4px; }
.fast { display: flex; align-items: center; gap: 5px; height: 27px; padding-left: 3px; }
.run { width: 57px; display: flex; flex-direction: column; align-items: center; padding-top: 5px; }
.run:nth-child(2) { margin-left: 4px; }
.run span { margin-top: 6px; line-height: 18px; }
.run .tri { margin: 5px 0 0 2px; }
.run.off { color: #a4a4a4; }
.s-sim .caption { margin-top: 2px; }
.s-end { flex: 1; display: flex; align-items: flex-end; justify-content: flex-end; padding: 0 6px 3px 0; }
.workarea { flex: 1; display: flex; min-height: 0; }
.mb { width: 30px; padding: 1px 0 0 1px; border-right: 1px solid #b4b4b4; }
.mb span { display: block; width: 22px; height: 94px; background: #fff; border: 1px solid #c8c8c8; writing-mode: vertical-rl; transform: rotate(180deg); line-height: 20px; text-align: center; font-size: 11px; white-space: nowrap; }
.editor { flex: 1; display: flex; flex-direction: column; }
.navrow { display: flex; align-items: flex-end; height: 27px; padding: 0 9px 0 3px; border-bottom: 1px solid #9aa0a8; }
.doctab { width: 84px; height: 25px; margin-bottom: -1px; background: #fff; border: 1px solid #c8c8c8; border-bottom: 0; text-align: center; line-height: 27px; font-size: 11.500px; letter-spacing: -.55px; }
.kbd { margin: 0 0 6px auto; }
.edbody { flex: 1; display: flex; }
.palette { width: 34px; }
.ico { font: bold 8px "Liberation Sans", sans-serif; }
.canvas-col { width: 615px; display: flex; flex-direction: column; border: 1px solid #848a94; border-top: 2px solid #848a94; height: 525px; background: #fff; }
.crumbs { display: flex; align-items: center; gap: 2px; height: 29px; padding: 0 5px 0 2px; border-bottom: 2px solid #848a94; }
.crumbs span { margin-right: 4px; letter-spacing: -.42px; }
.crumbs .tri { margin: 0 1px 3px auto; }
.diagram { height: 477px; letter-spacing: 0; }
.dtitle { font: bold 26px "Noto Sans", sans-serif; }
.dlabel { font: 14.600px "Liberation Sans", sans-serif; }
.big { font-size: 16px; }
.sel { fill: #0098ea; }
.hscroll { flex: 1; display: flex; align-items: center; justify-content: space-between; padding: 0 4px; background: #f0f0f0; }
.thumb { width: 564px; height: 15px; margin-left: 15px; background: #cdcdcd; }
.sl-status { display: flex; align-items: center; height: 21px; padding: 2px 3px 0 6px; color: #222; }
.st1 { width: 336px; } .st2 { width: 220px; } .st3 { color: #28289c; white-space: nowrap; letter-spacing: -.45px; }
.vline { width: 1px; height: 16px; margin: 0 7px 0 auto; background: #ccc; }

/* Taskbar */
.taskbar { position: absolute; left: 0; top: 728px; width: 1366px; height: 40px; display: flex; background: #101010; color: #fff; }
.start { width: 48px; display: flex; align-items: center; justify-content: center; }
.tsearch { width: 344px; display: flex; align-items: center; gap: 11px; padding-left: 11px; background: #3f3f3f; border: 1px solid #666; color: #d8d8d8; font-size: 14.500px; letter-spacing: -.3px; }
.tbtn { width: 48px; display: flex; align-items: center; justify-content: center; }
.app { border-bottom: 3px solid transparent; background: linear-gradient(#ffb0a8, #ffb0a8) center bottom / 40px 3px no-repeat border-box; }
.first { margin-left: 3px; }
.pop { margin-left: 2px; }
.mat { margin-left: 1px; background: linear-gradient(#ffb0a8, #ffb0a8) center bottom / 48px 3px no-repeat border-box, #343434; }
.tray { flex: 1; display: flex; align-items: center; justify-content: flex-end; }
.help { margin-right: 6px; }
.qm { font: bold 18px "Open Sans", sans-serif; fill: #fff; text-anchor: middle; }
.eng { width: 37px; padding-left: 7px; letter-spacing: -.3px; }
.clock { width: 70px; text-align: center; line-height: 18px; white-space: nowrap; letter-spacing: -.4px; }
.notif { margin: 0 19px 0 11px; }
.peek { width: 1px; height: 40px; margin-right: 4px; background: #555; }
```
